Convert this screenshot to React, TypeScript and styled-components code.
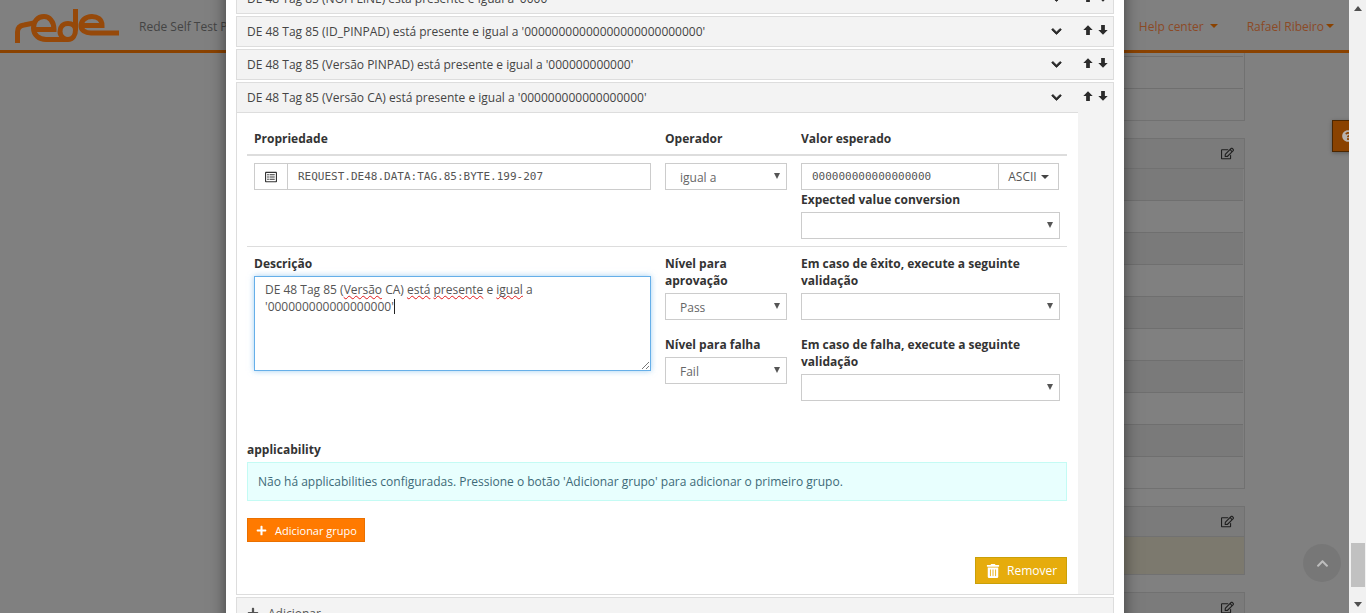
import styled, { createGlobalStyle } from 'styled-components'
import {
  FaChevronDown,
  FaChevronUp,
  FaPlus,
  FaQuestionCircle,
  FaRegEdit,
  FaRegListAlt,
  FaTrashAlt,
} from 'react-icons/fa'
import { ImArrowDown, ImArrowUp } from 'react-icons/im'

const GlobalStyle = createGlobalStyle`
    html, body {
        margin: 0;
        height: 100%;
        overflow: hidden;
    }
    body {
        font-family: "Open Sans", "Liberation Sans", sans-serif;
        font-size: 12px;
        color: #333;
    }
    * {
        box-sizing: border-box;
    }
`

const Screen = styled.div`
    display: flex;
    width: 1366px;
    height: 613px;
`
const Viewport = styled.div`
    position: relative;
    flex: 1;
    overflow: hidden;
    background: #808080;
`

// dimmed page behind the dialog
const Navbar = styled.div`
    display: flex;
    align-items: center;
    justify-content: space-between;
    height: 53px;
    padding: 2px 15px 0 15px;
    border-bottom: 3px solid #8a4200;
`
const Brand = styled.div`
    display: flex;
    align-items: center;
    gap: 19px;
    font-size: 12px;
    color: #444;
`
const NavMenu = styled.div`
    display: flex;
    gap: 29px;
    font-size: 12px;
    color: #8c4a26;
`
const NavItem = styled.span`
    display: flex;
    align-items: center;
    gap: ${(p: { $gap: number }) => p.$gap}px;
`
const Caret = styled.i<{ $color?: string }>`
    border-top: 4px solid ${(p) => p.$color ?? '#8a4200'};
    border-left: 4px solid transparent;
    border-right: 4px solid transparent;
`
const Cards = styled.div`
    display: flex;
    flex-direction: column;
    gap: 17px;
    width: 945px;
    margin-left: 300px;
`
const Card = styled.div`
    border: 1px solid #717171;
    border-top-width: ${(p: { $open?: boolean }) => (p.$open ? 0 : 1)}px;
`
const CardHeader = styled.div`
    display: flex;
    align-items: center;
    justify-content: flex-end;
    height: 30px;
    padding-right: 10px;
    background: #7b7b7b;
    border-bottom: 1px solid #717171;
    color: #1e1e1e;
    font-size: 13px;
`
const CardRow = styled.div<{ $h?: number; $dark?: boolean }>`
    height: ${(p) => p.$h ?? 32}px;
    margin-right: 1px;
    background: ${(p) => (p.$dark ? '#7a7a7a' : '#808080')};
    border-bottom: 1px solid #6f6f6f;

    &:last-child {
        height: 31px;
        border-bottom: 0;
    }
`
const CardWarning = styled.div`
    height: 37px;
    background: #7c796e;
`
const HelpTab = styled.div`
    position: absolute;
    top: 120px;
    left: 1332px;
    display: flex;
    align-items: center;
    width: 40px;
    height: 32px;
    padding-left: 9px;
    background: #8a4200;
    border: 1px solid #4b2600;
    box-shadow: 0 1px 4px rgba(0, 0, 0, 0.3);
    color: #b9b3ae;
    font-size: 12px;
`
const ScrollTop = styled.div`
    position: absolute;
    top: 544px;
    left: 1303px;
    display: flex;
    align-items: center;
    justify-content: center;
    width: 38px;
    height: 38px;
    border-radius: 50%;
    background: #777;
    color: #bdbdbd;
    font-size: 13px;
`

// dialog
const Modal = styled.div`
    position: absolute;
    top: -27px;
    left: 226px;
    display: flex;
    flex-direction: column;
    gap: 2px;
    width: 898px;
    padding: 10px;
    background: #fff;
    box-shadow: 0 5px 15px rgba(0, 0, 0, 0.5);
`
const Item = styled.div`
    display: flex;
    background: #f3f3f3;
    border: 1px solid #ddd;
    flex-shrink: 0;
`
const ItemMain = styled.div`
    flex: 1;
    min-width: 0;
`
const ItemHeader = styled.div<{ $open?: boolean }>`
    display: flex;
    align-items: center;
    justify-content: space-between;
    height: ${(p) => (p.$open ? 30 : 29)}px;
    padding: 0 16px ${(p) => (p.$open ? 1 : 0)}px 10px;
    border-bottom: ${(p) => (p.$open ? '1px solid #ddd' : '0')};
    color: #444;
    font-size: 12px;
`
const ItemSide = styled.div`
    display: flex;
    justify-content: center;
    gap: 5px;
    width: 35px;
    padding-top: 8px;
    color: #2b2b2b;
    font-size: 10px;
`
const Toggle = styled(FaChevronDown)`
    color: #2b2b2b;
    font-size: 11px;
    stroke: currentColor;
    stroke-width: 40;
`
const Body = styled.div`
    background: #fff;
    padding: 17px 11px 10px 10px;
`
const FormHeader = styled.div`
    display: grid;
    grid-template-columns: 397px 122px 1fr;
    column-gap: 14px;
    padding: 0 7px 7px;
    border-bottom: 2px solid #ddd;
`
const FormRow = styled.div`
    display: grid;
    grid-template-columns: 397px 122px 259px;
    column-gap: 14px;
    padding: ${(p: { $top: number }) => p.$top}px 7px 7px;
`
const FormDivider = styled.div`
    border-top: 1px solid #ddd;
`
const Column = styled.div`
    display: flex;
    flex-direction: column;
`
const Label = styled.div<{ $gap?: number; $top?: number }>`
    margin-top: ${(p) => p.$top ?? 0}px;
    margin-bottom: ${(p) => p.$gap ?? 4}px;
    font-weight: 700;
    font-size: 12px;
    line-height: 17px;
    color: #333;
`
const InputGroup = styled.div`
    display: flex;
    width: ${(p: { $width?: number }) => (p.$width ? `${p.$width}px` : '100%')};
    height: 27px;
    border: 1px solid #ccc;
    background: #fff;
`
const Addon = styled.div`
    display: flex;
    align-items: center;
    justify-content: center;
    gap: 4px;
    width: 33px;
    flex-shrink: 0;
    border-right: 1px solid #ccc;
    color: #333;
    font-size: 12px;
`
const DropAddon = styled(Addon)`
    width: 60px;
    border-right: 0;
    border-left: 1px solid #ccc;
    color: #555;
`
const MonoInput = styled.input`
    flex: 1;
    min-width: 0;
    padding: 0 10px;
    border: 0;
    outline: 0;
    background: transparent;
    font-family: "DejaVu Sans Mono", "Liberation Mono", monospace;
    font-size: 11px;
    color: #555;
`
const SelectBox = styled.div`
    position: relative;
    height: 27px;

    &::after {
        content: "";
        position: absolute;
        top: 10px;
        right: 7px;
        border-top: 6px solid #555;
        border-left: 3.5px solid transparent;
        border-right: 3.5px solid transparent;
    }
`
const Select = styled.select`
    appearance: none;
    width: 100%;
    height: 100%;
    padding: 2px 0 0 14px;
    border: 1px solid #ccc;
    border-radius: 0;
    outline: 0;
    background: #fff;
    font-family: inherit;
    font-size: 12px;
    color: #666;
`
const Stack = styled.div`
    display: flex;
    flex-direction: column;
    gap: 16px;
`
const Textarea = styled.div`
    position: relative;
    height: 95px;
    padding: 4px 10px;
    border: 1px solid #66afe9;
    box-shadow: 0 0 6px rgba(102, 175, 233, 0.6);
    font-size: 12px;
    line-height: 17px;
    color: #555;
`
const Misspelled = styled.span`
    text-decoration: underline wavy #e01b1b 1px;
    text-decoration-skip-ink: none;
`
const TextCursor = styled.i`
    display: inline-block;
    width: 1px;
    height: 15px;
    vertical-align: -3px;
    background: #222;
`
const Grip = styled.svg`
    position: absolute;
    right: 0;
    bottom: 0;
`
const Section = styled.div`
    margin-top: 33px;
`
const Alert = styled.div`
    display: flex;
    align-items: center;
    height: 39px;
    padding: 0 10px;
    border: 1px solid #c4fbf4;
    background: #e8fffe;
    color: #3d6a78;
    font-size: 12px;
`
const AddButton = styled.button`
    display: flex;
    align-items: center;
    gap: 8px;
    width: 118px;
    height: 24px;
    margin-top: 17px;
    padding: 0 0 0 8px;
    border: 1px solid #ea7000;
    border-radius: 0;
    background: #ff7a00;
    color: #fff;
    font-family: inherit;
    font-size: 11px;
`
const Footer = styled.div`
    display: flex;
    justify-content: flex-end;
    margin-top: 15px;
`
const RemoveButton = styled.button`
    display: flex;
    align-items: center;
    gap: 7px;
    width: 92px;
    height: 27px;
    padding: 0 0 0 10px;
    border: 1px solid #c9a008;
    border-radius: 0;
    background: #e6ac0c;
    color: #fff;
    font-family: inherit;
    font-size: 12px;
`
const AddRow = styled.div`
    display: flex;
    align-items: center;
    gap: 9px;
    height: 30px;
    padding-left: 10px;
    color: #555;
    font-size: 12px;
`

// browser scrollbar, outside the dimmed area
const Scrollbar = styled.div`
    display: flex;
    flex-direction: column;
    justify-content: space-between;
    align-items: center;
    width: 17px;
    padding: 6px 0;
    background: #f1f1f1;
`
const ScrollTrack = styled.div`
    flex: 1;
    width: 100%;
    padding: 532px 1px 0 2px;
`
const ScrollThumb = styled.div`
    height: 44px;
    background: #c1c1c1;
`
const ScrollArrow = styled.i<{ $down?: boolean }>`
    border-left: 4px solid transparent;
    border-right: 4px solid transparent;
    ${(p) => (p.$down ? 'border-top: 5px solid #505050;' : 'border-bottom: 5px solid #505050;')}
`

const Logo = () => (
  <svg width="105" height="37" viewBox="15 7 105 37" fill="none" stroke="#96490a" strokeWidth="5" strokeLinecap="butt">
    <path d="M17.5 42 V31 Q17.5 25 24 24 L34 22" />
    <path d="M36 28.5 H54 C54 20 49 15.5 44 15.5 C37 15.5 33.5 21 33.5 27 C33.5 34 39 38.5 46 38.5 H68 C73 38.5 75.5 34 75.5 29 V8" />
    <path d="M75.5 29 C75.5 25 72 22.5 68 22.5 C63 22.5 60 26 60 30.5 C60 35 64 38.5 68 38.5" />
    <path d="M82 24.5 H102 C102 18 97 15.5 92 15.5 C85 15.5 81 20 81 25 C81 29 85 32 91 32 H119" />
  </svg>
)

const ClosedItem = ({ title }: { title: string }) => (
  <Item>
    <ItemMain>
      <ItemHeader>
        <span>{title}</span>
        <Toggle />
      </ItemHeader>
    </ItemMain>
    <ItemSide>
      <ImArrowUp />
      <ImArrowDown />
    </ItemSide>
  </Item>
)

const Dropdown = ({ value = '' }: { value?: string }) => (
  <SelectBox>
    <Select defaultValue={value}>
      <option value={value}>{value}</option>
    </Select>
  </SelectBox>
)

const stripes = [true, false, true, false, true, false, true, false, true, false]

const App = () => {
  return (
    <Screen>
      <GlobalStyle />
      <Viewport>
        <Navbar>
          <Brand>
            <Logo />
            <span>Rede Self Test Portal</span>
          </Brand>
          <NavMenu>
            <NavItem $gap={6}>Help center <Caret /></NavItem>
            <NavItem $gap={2}>Rafael Ribeiro<Caret /></NavItem>
          </NavMenu>
        </Navbar>
        <Cards>
          <Card $open>
            <CardRow $h={4} />
            <CardRow />
            <CardRow />
          </Card>
          <Card>
            <CardHeader><FaRegEdit /></CardHeader>
            {stripes.map((dark, index) => (
              <CardRow key={index} $dark={dark} />
            ))}
          </Card>
          <Card>
            <CardHeader><FaRegEdit /></CardHeader>
            <CardWarning />
          </Card>
          <Card>
            <CardHeader><FaRegEdit /></CardHeader>
          </Card>
        </Cards>
        <HelpTab><FaQuestionCircle /></HelpTab>
        <ScrollTop><FaChevronUp /></ScrollTop>

        <Modal>
          <ClosedItem title="DE 48 Tag 85 (NOFFLINE) está presente e igual a '0000" />
          <ClosedItem title="DE 48 Tag 85 (ID_PINPAD) está presente e igual a '00000000000000000000000000'" />
          <ClosedItem title="DE 48 Tag 85 (Versão PINPAD) está presente e igual a '000000000000'" />
          <Item>
            <ItemMain>
              <ItemHeader $open>
                <span>DE 48 Tag 85 (Versão CA) está presente e igual a '000000000000000000'</span>
                <Toggle />
              </ItemHeader>
              <Body>
                <FormHeader>
                  <Label $gap={0}>Propriedade</Label>
                  <Label $gap={0}>Operador</Label>
                  <Label $gap={0}>Valor esperado</Label>
                </FormHeader>
                <FormRow $top={7}>
                  <Column>
                    <InputGroup>
                      <Addon><FaRegListAlt /></Addon>
                      <MonoInput defaultValue="REQUEST.DE48.DATA:TAG.85:BYTE.199-207" />
                    </InputGroup>
                  </Column>
                  <Column>
                    <Dropdown value="igual a" />
                  </Column>
                  <Column>
                    <InputGroup $width={258}>
                      <MonoInput defaultValue="000000000000000000" />
                      <DropAddon>ASCII <Caret $color="#444" /></DropAddon>
                    </InputGroup>
                    <Label $top={1}>Expected value conversion</Label>
                    <Dropdown />
                  </Column>
                </FormRow>
                <FormDivider />
                <FormRow $top={8}>
                  <Column>
                    <Label>Descrição</Label>
                    <Textarea>
                      DE 48 Tag 85 (<Misspelled>Versão</Misspelled> CA) <Misspelled>está</Misspelled>{' '}
                      <Misspelled>presente</Misspelled> e <Misspelled>igual</Misspelled> a
                      <br />
                      '000000000000000000'<TextCursor />
                      <Grip width="9" height="9" viewBox="0 0 9 9" stroke="#777" strokeWidth="1">
                        <path d="M1 8 L8 1 M5 8 L8 5" />
                      </Grip>
                    </Textarea>
                  </Column>
                  <Stack>
                    <Column>
                      <Label>Nível para aprovação</Label>
                      <Dropdown value="Pass" />
                    </Column>
                    <Column>
                      <Label>Nível para falha</Label>
                      <Dropdown value="Fail" />
                    </Column>
                  </Stack>
                  <Stack>
                    <Column>
                      <Label>Em caso de êxito, execute a seguinte validação</Label>
                      <Dropdown />
                    </Column>
                    <Column>
                      <Label>Em caso de falha, execute a seguinte validação</Label>
                      <Dropdown />
                    </Column>
                  </Stack>
                </FormRow>
                <Section>
                  <Label>applicability</Label>
                  <Alert>Não há applicabilities configuradas. Pressione o botão 'Adicionar grupo' para adicionar o primeiro grupo.</Alert>
                </Section>
                <AddButton><FaPlus /> Adicionar grupo</AddButton>
                <Footer>
                  <RemoveButton><FaTrashAlt size={14} /> Remover</RemoveButton>
                </Footer>
              </Body>
            </ItemMain>
            <ItemSide>
              <ImArrowUp />
              <ImArrowDown />
            </ItemSide>
          </Item>
          <Item>
            <ItemMain>
              <AddRow><FaPlus /> Adicionar</AddRow>
            </ItemMain>
          </Item>
        </Modal>
      </Viewport>
      <Scrollbar>
        <ScrollArrow />
        <ScrollTrack><ScrollThumb /></ScrollTrack>
        <ScrollArrow $down />
      </Scrollbar>
    </Screen>
  )
}

export default App
